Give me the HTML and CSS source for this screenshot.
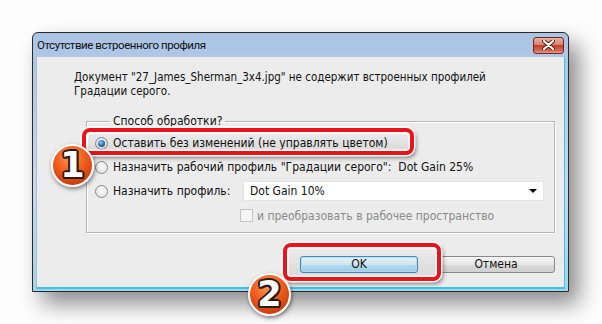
FILE: index.html
```html
<!DOCTYPE html>
<html lang="ru">
<head>
    <meta charset="UTF-8">
    <title>Отсутствие встроенного профиля</title>
    <link rel="stylesheet" href="styles.css">
</head>
<body>

    <div class="dialog">
        <div class="titlebar">
            <span class="title">Отсутствие встроенного профиля</span>
            <div class="close">
                <svg width="13" height="10" viewBox="0 0 13 10">
                    <path d="M2 1 L11 9 M11 1 L2 9" stroke="#5a1a10" stroke-width="4" stroke-linecap="round"/>
                    <path d="M2 1 L11 9 M11 1 L2 9" stroke="#fff" stroke-width="2.2" stroke-linecap="round"/>
                </svg>
            </div>
        </div>

        <div class="content">
            <p class="message">Документ "27_James_Sherman_3x4.jpg" не содержит встроенных профилей<br>Градации серого.</p>

            <fieldset class="group">
                <legend>Способ обработки?</legend>
                <div class="option">
                    <span class="radio checked"></span>
                    <span>Оставить без изменений (не управлять цветом)</span>
                </div>
                <div class="option">
                    <span class="radio"></span>
                    <span>Назначить рабочий профиль "Градации серого":&nbsp; Dot Gain 25%</span>
                </div>
                <div class="option">
                    <span class="radio"></span>
                    <span class="opt-label">Назначить профиль:</span>
                    <div class="select">
                        <span>Dot Gain 10%</span>
                        <span class="arrow"></span>
                    </div>
                </div>
                <div class="option sub">
                    <span class="checkbox"></span>
                    <span>и преобразовать в рабочее пространство</span>
                </div>
            </fieldset>

            <div class="buttons">
                <div class="btn default">OK</div>
                <div class="btn">Отмена</div>
            </div>
        </div>

        <!-- step markers -->
        <div class="ring ring-1"></div>
        <div class="ring ring-2"></div>
        <div class="badge badge-1">1</div>
        <div class="badge badge-2">2</div>
    </div>

</body>
</html>
```

FILE: styles.css
```css
html,
body{
    height: 100%;
}

body{
    margin: 0;
    min-height: 324px;
    background: #fdfdfd;
    font-family: "DejaVu Sans Condensed", "DejaVu Sans", sans-serif;
    font-size: 12px;
    color: #111;
}

.dialog{
    position: relative;
    box-sizing: border-box;
    width: 537px;
    height: 260px;
    margin: 32px 0 0 32px;
    padding: 0 3px 2px;
    border: 1px solid #2a2a2a;
    border-radius: 6px 6px 0 0;
    background: linear-gradient(#aac4e4, #c6d9ef 60%, #9fd6ee);
    box-shadow: 10px 12px 22px rgba(0,0,0,0.45);
    display: flex;
    flex-direction: column;
}

.titlebar{
    height: 24px;
    display: flex;
    align-items: center;
    justify-content: space-between;
}

.title{
    padding-left: 1px;
    font-family: Roboto, "Liberation Sans", sans-serif;
    font-size: 11.5px;
    letter-spacing: -0.45px;
    color: #111;
}

.close{
    width: 29px;
    height: 15px;
    margin-right: 1px;
    border: 1px solid #6e2a20;
    border-radius: 3px;
    background: linear-gradient(#e9b2a4, #d8816c 45%, #c2402a 50%, #d46b55 85%, #e79d8b);
    display: flex;
    align-items: center;
    justify-content: center;
}

.content{
    flex: 1;
    background: #ececec;
    border-bottom: 2px solid #38c4e6;
    border-left: 1px solid #9fc0e0;
    border-right: 1px solid #38c4e6;
    display: flex;
    flex-direction: column;
}

.message{
    margin: 13px 0 0 37px;
    font-size: 11.5px;
    line-height: 14px;
}

.group{
    margin: 16px 9px 0 49px;
    padding: 3px 8px 4px;
    border: 1px solid #b5b5b5;
    box-shadow: inset 1px 1px 0 #fff, 1px 1px 0 #fff;
}

.group legend{
    margin-left: 15px;
    padding: 0 3px;
    line-height: 14px;
}

.option{
    height: 24px;
    display: flex;
    align-items: center;
    white-space: nowrap;
}

.radio{
    width: 11px;
    height: 11px;
    margin-right: 5px;
    border: 1px solid #8b8b8b;
    border-radius: 50%;
    background: radial-gradient(circle at 50% 40%, #fff, #d9d9d9);
    position: relative;
    flex: none;
}

.radio.checked::after{
    content: '';
    position: absolute;
    left: 2px;
    top: 2px;
    width: 7px;
    height: 7px;
    border-radius: 50%;
    background: radial-gradient(circle at 40% 35%, #8fd0ff, #1c6fb6 60%, #0b3f78);
}

.opt-label{
    width: 130px;
}

.select{
    flex: 1;
    height: 20px;
    margin-right: 2px;
    background: #fff;
    border: 1px solid #e4e4e4;
    display: flex;
    align-items: center;
    justify-content: space-between;
    padding: 0 6px;
    box-sizing: border-box;
}

.arrow{
    width: 0;
    height: 0;
    border-left: 4px solid transparent;
    border-right: 4px solid transparent;
    border-top: 4px solid #000;
}

.option.sub{
    padding-left: 145px;
    height: 25px;
    color: #8a8a8a;
}

.checkbox{
    width: 11px;
    height: 11px;
    margin-right: 4px;
    border: 1px solid #c4c4c4;
    background: #f4f4f4;
    flex: none;
}

.buttons{
    margin: 23px 9px 0 0;
    display: flex;
    justify-content: flex-end;
    gap: 19px;
}

.btn{
    width: 116px;
    height: 15px;
    line-height: 15px;
    text-align: center;
    border: 1px solid #8a8a8a;
    border-radius: 3px;
    background: linear-gradient(#f5f5f5, #e6e6e6 50%, #d9d9d9 51%, #d0d0d0);
}

.btn.default{
    border-color: #3c8fc6;
    background: linear-gradient(#eaf6fd, #d9f0fc 50%, #bee6fd 51%, #a7d9f5);
    box-shadow: inset 0 0 0 1px #bfe6fb;
}

/* step markers over the dialog */

.ring{
    position: absolute;
    box-sizing: border-box;
    border: 4px solid #e8141a;
    border-radius: 8px;
    background: linear-gradient(rgba(255,255,255,0), rgba(0,0,0,0.08));
    box-shadow: 0 0 0 1.5px #fff, inset 0 0 0 1.5px #fff, 2px 3px 4px rgba(0,0,0,0.45);
}

.ring-1{
    left: 49px;
    top: 95px;
    width: 332px;
    height: 27px;
}

.ring-2{
    left: 250px;
    top: 210px;
    width: 158px;
    height: 38px;
}

.badge{
    position: absolute;
    z-index: 2;
    box-sizing: border-box;
    width: 43px;
    height: 43px;
    border-radius: 50%;
    border: 2px solid #fff;
    background: radial-gradient(circle at 45% 30%, #ff9a55, #f05a1a 45%, #b42a05);
    box-shadow: 1px 2px 4px rgba(0,0,0,0.5);
    font-family: "DejaVu Sans", sans-serif;
    font-weight: bold;
    font-size: 35px;
    line-height: 39px;
    text-align: center;
    color: #fff;
    text-shadow: -2px 0 0 #2a1a10, 2px 0 0 #2a1a10, 0 -2px 0 #2a1a10, 0 2px 0 #2a1a10,
                 -1.5px -1.5px 0 #2a1a10, 1.5px 1.5px 0 #2a1a10, -1.5px 1.5px 0 #2a1a10, 1.5px -1.5px 0 #2a1a10;
}

.badge-1{
    left: 18px;
    top: 111px;
}

.badge-2{
    left: 215px;
    top: 240px;
}
```
